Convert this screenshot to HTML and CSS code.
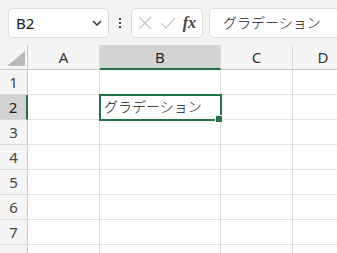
FILE: index.html
```html
<!DOCTYPE html>
<html lang="ja">
<head>
<meta charset="UTF-8">
<title>グラデーション</title>
<link rel="stylesheet" href="styles.css">
</head>
<body>
<div class="toolbar">
  <div class="name-box">
    <span class="name-text">B2</span>
    <svg class="chevron" width="10" height="6" viewBox="0 0 10 6"><path d="M1 1 L5 5 L9 1" fill="none" stroke="#333" stroke-width="1.5"/></svg>
  </div>
  <div class="dots"><span></span><span></span><span></span></div>
  <div class="fx-group">
    <svg width="16" height="16" viewBox="0 0 16 16"><path d="M2 2 L14 14 M14 2 L2 14" stroke="#c4c4c4" stroke-width="1.2"/></svg>
    <svg width="16" height="16" viewBox="0 0 16 16"><path d="M1 8 L6 13 L15 3" fill="none" stroke="#c4c4c4" stroke-width="1.2"/></svg>
    <span class="fx">fx</span>
  </div>
  <div class="formula-bar">グラデーション</div>
</div>

<div class="sheet">
  <div class="corner"><span class="tri"></span></div>
  <div class="col-head">A</div>
  <div class="col-head active">B</div>
  <div class="col-head">C</div>
  <div class="col-head last">D</div>

  <div class="row-head">1</div>
  <div class="cell"></div><div class="cell"></div><div class="cell"></div><div class="cell last"></div>

  <div class="row-head active">2</div>
  <div class="cell"></div><div class="cell selected">グラデーション</div><div class="cell"></div><div class="cell last"></div>

  <div class="row-head">3</div>
  <div class="cell"></div><div class="cell"></div><div class="cell"></div><div class="cell last"></div>

  <div class="row-head">4</div>
  <div class="cell"></div><div class="cell"></div><div class="cell"></div><div class="cell last"></div>

  <div class="row-head">5</div>
  <div class="cell"></div><div class="cell"></div><div class="cell"></div><div class="cell last"></div>

  <div class="row-head">6</div>
  <div class="cell"></div><div class="cell"></div><div class="cell"></div><div class="cell last"></div>

  <div class="row-head">7</div>
  <div class="cell"></div><div class="cell"></div><div class="cell"></div><div class="cell last"></div>

  <div class="row-head">8</div>
  <div class="cell"></div><div class="cell"></div><div class="cell"></div><div class="cell last"></div>
</div>
</body>
</html>
```

FILE: styles.css
```css
body {
  margin: 0;
  width: 337px;
  height: 253px;
  overflow: hidden;
  background-color: #fff;
  font-family: "Noto Sans", "Noto Sans CJK JP", sans-serif;
  color: #222;
}

.toolbar {
  display: flex;
  align-items: center;
  height: 45px;
  padding-left: 8px;
  background-color: #f3f3f3;
  box-sizing: border-box;
  overflow: hidden;
}

.toolbar > div {
  flex: none;
}

.name-box {
  display: flex;
  align-items: center;
  justify-content: space-between;
  width: 101px;
  height: 30px;
  padding: 0 6px 0 7px;
  box-sizing: border-box;
  background-color: #fff;
  border: 1px solid #dcdcdc;
  border-radius: 5px;
}

.name-text {
  font-size: 15px;
  color: #222;
}

.chevron {
  margin-top: 1px;
}

.dots {
  display: flex;
  flex-direction: column;
  align-items: center;
  gap: 2px;
  width: 22px;
}

.dots span {
  width: 2px;
  height: 2px;
  background-color: #444;
}

.fx-group {
  display: flex;
  align-items: center;
  justify-content: space-between;
  width: 72px;
  height: 30px;
  padding: 0 5px 0 5px;
  box-sizing: border-box;
  background-color: #fff;
  border: 1px solid #dcdcdc;
  border-radius: 5px;
}

.fx {
  font-family: "Liberation Serif", serif;
  font-style: italic;
  font-weight: bold;
  font-size: 16px;
  color: #444;
  margin-right: 1px;
}

.formula-bar {
  width: 140px;
  height: 30px;
  margin-left: 6px;
  padding-left: 13px;
  box-sizing: border-box;
  background-color: #fff;
  border: 1px solid #dcdcdc;
  border-right: none;
  border-radius: 5px 0 0 5px;
  font-family: "Noto Sans CJK JP", sans-serif;
  font-weight: 300;
  font-size: 14px;
  line-height: 27px;
  color: #111;
  white-space: nowrap;
}

.sheet {
  display: grid;
  grid-template-columns: 28px 72px 121px 72px 60px;
  grid-auto-rows: 25px;
}

.sheet > div {
  box-sizing: border-box;
}

.corner {
  position: relative;
  background-color: #f5f5f5;
  border-right: 1px solid #c8c8c8;
  border-bottom: 1px solid #c8c8c8;
}

.tri {
  position: absolute;
  right: 2px;
  bottom: 3px;
  width: 0;
  height: 0;
  border-left: 18px solid transparent;
  border-bottom: 15px solid #b9b9b9;
}

.col-head {
  display: flex;
  align-items: center;
  justify-content: center;
  background-color: #f5f5f5;
  border-right: 1px solid #dadada;
  border-bottom: 1px solid #c8c8c8;
  font-size: 15px;
  color: #333;
}

.col-head.active {
  background-color: #d3d3d3;
  border-bottom: 2px solid #217346;
  color: #222;
}

.col-head.last {
  border-right: none;
}

.row-head {
  display: flex;
  align-items: center;
  justify-content: center;
  background-color: #f5f5f5;
  border-right: 1px solid #c8c8c8;
  border-bottom: 1px solid #dadada;
  font-size: 15px;
  color: #444;
}

.row-head.active {
  background-color: #d3d3d3;
  border-right: 2px solid #217346;
  color: #222;
}

.cell {
  border-right: 1px solid #e1e1e1;
  border-bottom: 1px solid #e1e1e1;
}

.cell.last {
  border-right: none;
}

.cell.selected {
  position: relative;
  outline: 2px solid #217346;
  outline-offset: -1px;
  padding-left: 4px;
  font-family: "Noto Sans CJK JP", sans-serif;
  font-weight: 300;
  font-size: 14px;
  line-height: 23px;
  color: #111;
  white-space: nowrap;
}

.cell.selected::after {
  content: "";
  position: absolute;
  right: -3px;
  bottom: -4px;
  width: 6px;
  height: 6px;
  background-color: #217346;
  border: 1px solid #fff;
}
```
